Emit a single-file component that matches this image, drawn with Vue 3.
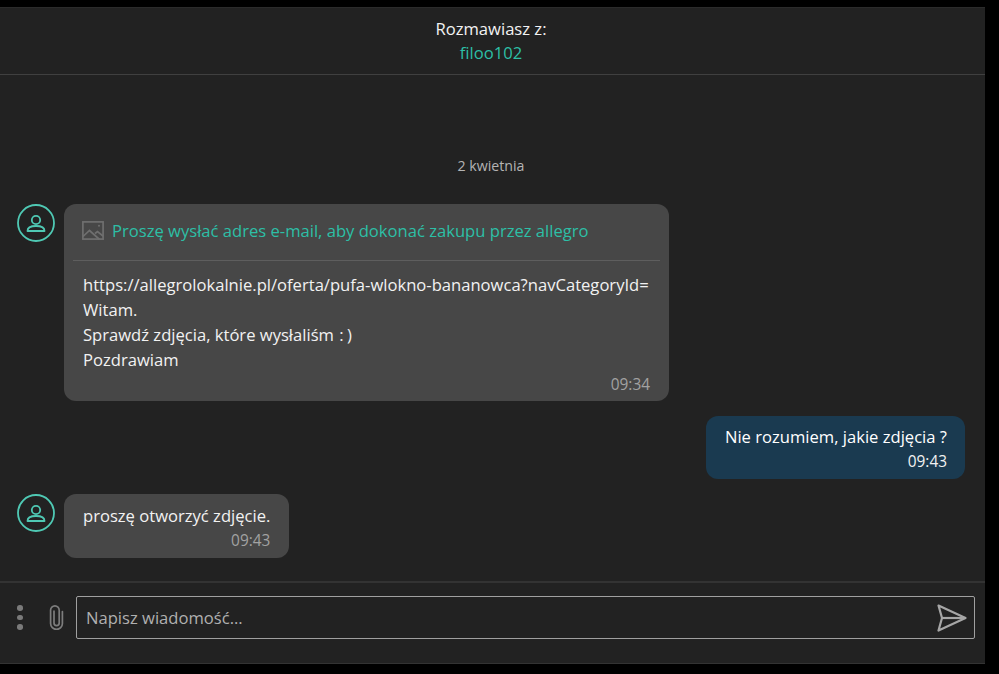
<script setup>
const owner = "filoo102"
</script>

<template>
  <div class="page">
    <div class="panel">
      <header class="head">
        <div class="head-label">Rozmawiasz z:</div>
        <div class="head-name">{{ owner }}</div>
      </header>
      <main class="thread">
        <div class="date">2 kwietnia</div>
        <div class="row">
          <svg class="avatar" viewBox="0 0 38 38" fill="none">
            <circle cx="19" cy="19" r="18" stroke="#4fc9b4" stroke-width="1.8" />
            <circle cx="19" cy="16" r="4.2" stroke="#4fc9b4" stroke-width="1.8" />
            <path d="M10.5 27c0-3.5 3.5-5 8.5-5s8.5 1.500 8.500 5z" stroke="#4fc9b4" stroke-width="1.8" stroke-linejoin="round" />
          </svg>
          <div class="bubble in wide">
            <div class="subject">
              <svg class="img-icon" viewBox="0 0 22 19" fill="none" stroke="#6f6f6f" stroke-width="1.7">
                <rect x="0.9" y="0.9" width="20.2" height="17.2" />
                <path d="M1 15.5l6.5-6 10 9M13 12.5l2.5-2 5.5 4.5" />
                <circle cx="17" cy="4.8" r="1" fill="#6f6f6f" stroke="none" />
              </svg>
              <span>Proszę wysłać adres e-mail, aby dokonać zakupu przez allegro</span>
            </div>
            <div class="body-wrap">
              <div class="text">https://allegrolokalnie.pl/oferta/pufa-wlokno-bananowca?navCategoryId=<br />Witam.<br />Sprawdź zdjęcia, które wysłaliśm <span class="smile">:)</span><br />Pozdrawiam</div>
              <div class="time">09:34</div>
            </div>
          </div>
        </div>
        <div class="row out-row">
          <div class="bubble out">
            <div class="text">Nie rozumiem, jakie zdjęcia ?</div>
            <div class="time">09:43</div>
          </div>
        </div>
        <div class="row">
          <svg class="avatar" viewBox="0 0 38 38" fill="none">
            <circle cx="19" cy="19" r="18" stroke="#4fc9b4" stroke-width="1.8" />
            <circle cx="19" cy="16" r="4.2" stroke="#4fc9b4" stroke-width="1.8" />
            <path d="M10.5 27c0-3.5 3.5-5 8.5-5s8.5 1.500 8.500 5z" stroke="#4fc9b4" stroke-width="1.8" stroke-linejoin="round" />
          </svg>
          <div class="bubble in short">
            <div class="text">proszę otworzyć zdjęcie.</div>
            <div class="time">09:43</div>
          </div>
        </div>
      </main>
      <footer class="foot">
        <div class="dots"><i></i><i></i><i></i></div>
        <svg class="clip" viewBox="0 0 17 25" fill="none" stroke="#7d7d7d" stroke-width="1.7" stroke-linecap="round">
          <path d="M6 6v12a2.600 2.600 0 0 0 5.200 0V5.200a4.300 4.300 0 0 0-8.600 0v13.300a5.900 5.900 0 0 0 11.800 0V6.500" />
        </svg>
        <div class="input">
          <span class="placeholder">Napisz wiadomość...</span>
          <svg class="send" viewBox="0 0 30 28" fill="none" stroke="#a6a6a6" stroke-width="2.2" stroke-linejoin="round">
            <path d="M1.5 1.5L28.5 14 1.5 26.5 5 14z" />
            <path d="M5 14h23.5" />
          </svg>
        </div>
      </footer>
    </div>
  </div>
</template>

<style scoped>
.page {
  width: 999px;
  height: 674px;
  background: #000;
  padding: 7px 14px 10px 0;
  box-sizing: border-box;
  font-family: "Open Sans", "Liberation Sans", sans-serif;
  font-size: 16.6px;
  color: #f2f2f2;
  overflow: hidden;
}
.panel {
  height: 100%;
  background: #222;
  border-top: 1px solid #2b2b2b;
  border-bottom: 1px solid #333;
  box-sizing: border-box;
  display: flex;
  flex-direction: column;
}
.head {
  height: 67px;
  flex: none;
  box-sizing: border-box;
  border-bottom: 1px solid #404040;
  text-align: center;
  padding: 9px 3px 0 0;
  line-height: 24px;
}
.head-name {
  color: #2dbfa6;
}
.thread {
  flex: 1;
  min-height: 0;
  display: flex;
  flex-direction: column;
  padding: 81px 20px 0 17px;
}
.date {
  text-align: center;
  font-size: 14.2px;
  line-height: 20px;
  color: #b4b4b4;
  margin-bottom: 28px;
}
.row {
  display: flex;
  gap: 9px;
  align-items: flex-start;
  margin-bottom: 15px;
}
.out-row {
  justify-content: flex-end;
}
.avatar {
  width: 38px;
  height: 38px;
  flex: none;
}
.bubble {
  border-radius: 12px;
  padding: 8px 18px 5px 19px;
  line-height: 25px;
}
.in {
  background: #474747;
}
.out {
  background: #1a3a50;
  color: #fff;
}
.short {
  padding: 9px 19px 5px;
}
.wide {
  width: 605px;
  box-sizing: border-box;
  padding: 9px 9px 4px;
}
.subject {
  display: flex;
  align-items: center;
  gap: 8px;
  height: 48px;
  box-sizing: border-box;
  padding: 0 0 12px 9px;
  border-bottom: 1px solid #5e5e5e;
  color: #2dbfa6;
}
.img-icon {
  width: 22px;
  height: 19px;
  flex: none;
}
.body-wrap {
  padding: 11px 10px 0;
}
.text {
  white-space: nowrap;
}
.smile {
  letter-spacing: 3.500px;
  margin-left: 1px;
}
.time {
  text-align: right;
  font-size: 15.4px;
  line-height: 25px;
  color: #a2a2a2;
}
.out .time {
  color: #f2f2f2;
}
.foot {
  height: 82px;
  flex: none;
  box-sizing: border-box;
  border-top: 2px solid #333;
  display: flex;
  align-items: center;
  padding: 0 10px 11px 17px;
}
.dots {
  width: 6px;
  display: flex;
  flex-direction: column;
  gap: 4px;
  margin-right: 25px;
}
.dots i {
  width: 5.5px;
  height: 5.5px;
  border-radius: 50%;
  background: #7a7a7a;
}
.clip {
  width: 17px;
  height: 25px;
  flex: none;
  margin-right: 11px;
}
.input {
  flex: 1;
  height: 43px;
  box-sizing: border-box;
  border: 1px solid #a0a0a0;
  border-radius: 2px;
  display: flex;
  align-items: center;
  justify-content: space-between;
  padding: 0 7px 0 9px;
}
.placeholder {
  color: #b0b0b0;
}
.send {
  width: 30px;
  height: 28px;
  flex: none;
}
</style>
